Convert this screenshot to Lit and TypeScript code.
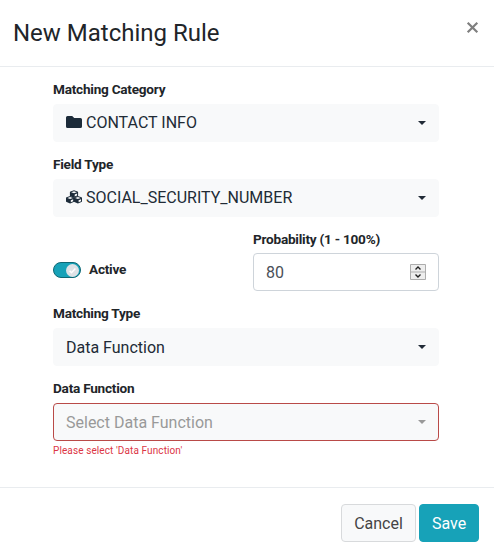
import { LitElement, html, css, svg, nothing } from "lit";
import { customElement, property } from "lit/decorators.js";

const folder = svg`<path fill="currentColor" d="M1.500 1h4.700l2 2h6.300A1.500 1.500 0 0 1 16 4.500v7a1.500 1.500 0 0 1-1.500 1.500h-13A1.500 1.500 0 0 1 0 11.500v-9A1.500 1.500 0 0 1 1.500 1z"/>`;
const cube = (x: number, y: number) => svg`<g transform="translate(${x} ${y})">
  <path fill="currentColor" d="M4.100 0 7.600 1.300Q8.200 1.500 8.200 2.100V5.200Q8.200 5.800 7.600 6.100L4.100 7.500.6 6.100Q0 5.800 0 5.200V2.100Q0 1.500.6 1.300z"/>
  <path fill="#f8f9fa" d="M4.100 1 6.900 2 4.100 3.100 1.300 2zM4.800 4.200 7.200 3.200V5.200L4.800 6.200z"/>
</g>`;
const cubes = svg`${cube(3.9, 0.2)}${cube(0, 6)}${cube(7.8, 6)}`;

@customElement("select-field")
export class SelectField extends LitElement {
  static styles = css`
    :host { display: block; }
    .label { font-size: 13.6px; font-weight: 700; line-height: 20px; height: 25px; letter-spacing: -0.24px; }
    .box {
      box-sizing: border-box; height: 38px; padding: 0 12px; border: 1px solid #f8f9fa;
      border-radius: 4px; background: #f8f9fa; display: flex; align-items: center; color: #212b36;
      font-size: 16px; line-height: 24px;
    }
    .invalid { border-color: #b94a48; color: #999; }
    svg { width: 16px; height: 16px; margin-right: 4px; flex: none; color: #1c2b39; }
    .text { flex: 1; }
    .plain { padding-top: 2px; }
    .caret { border: 4px solid transparent; border-top: 4px solid currentColor; border-bottom: 0; }
    .error { font-size: 10px; line-height: 15px; margin-top: 2px; color: #dc3545; letter-spacing: 0.1px; }
  `;
  @property() label = "";
  @property() value = "";
  @property() icon = "";
  @property() error = "";

  render() {
    return html`
      <div class="label">${this.label}</div>
      <div class="box ${this.error ? "invalid" : ""}">
        ${this.icon ? html`<svg viewBox="0 0 16 16">${this.icon === "folder" ? folder : cubes}</svg>` : nothing}
        <span class="text ${this.icon ? "" : "plain"}">${this.value}</span>
        <span class="caret"></span>
      </div>
      ${this.error ? html`<div class="error">${this.error}</div>` : nothing}
    `;
  }
}

@customElement("app-root")
export class AppRoot extends LitElement {
  static styles = css`
    :host { display: flex; flex-direction: column; box-sizing: border-box; height: 557px; width: 494px;
      background: #fff; color: #212529; font-family: Roboto, "Liberation Sans", sans-serif; }
    header { box-sizing: border-box; height: 67px; border-bottom: 1px solid #e9ecef; padding: 15px 15px 0 13px;
      display: flex; justify-content: space-between; }
    h1 { margin: 0; font-size: 24px; line-height: 36px; font-weight: 400; }
    .close { width: 13px; height: 13px; margin-top: 6px; color: #7f7f7f; }
    main { box-sizing: border-box; height: 421px; padding: 12px 55px 0 53px; border-bottom: 1px solid #e9ecef;
      display: flex; flex-direction: column; }
    select-field { margin-bottom: 12px; }
    .row { display: flex; justify-content: space-between; height: 62px; margin-bottom: 12px; }
    .label { font-size: 13.6px; font-weight: 700; line-height: 20px; letter-spacing: -0.24px; }
    .active { display: flex; align-items: center; gap: 8px; height: 20px; margin-top: 31px; }
    .active .label { padding-bottom: 2px; }
    .switch { box-sizing: border-box; width: 28px; height: 16px; border: 1px solid #0e6875; border-radius: 8px;
      background: #17a2b8; display: flex; justify-content: flex-end; align-items: center; padding-right: 1px; }
    .knob { width: 13px; height: 13px; }
    .prob { width: 186px; }
    .input { box-sizing: border-box; height: 38px; margin-top: 4px; border: 1px solid #ced4da; border-radius: 4px;
      display: flex; align-items: center; justify-content: space-between; padding: 0 12px; font-size: 16px; color: #495057; }
    .spin { width: 16px; height: 16px; }
    footer { display: flex; justify-content: flex-end; gap: 3px; padding: 16px 15px 0 0; }
    button { box-sizing: border-box; height: 38px; padding: 2px 0 0; border-radius: 4px; font: 400 16px/24px Roboto, sans-serif; }
    .cancel { width: 75px; border: 1px solid #d8dadc; background: #f8f9fa; color: #444; }
    .save { width: 60px; border: 1px solid #17a2b8; background: #17a2b8; color: #fff; }
  `;

  render() {
    return html`
      <header>
        <h1>New Matching Rule</h1>
        <svg class="close" viewBox="0 0 13 13"><path d="M1.700 1.700 11.300 11.300M11.300 1.700 1.700 11.300" stroke="currentColor" stroke-width="2.200" fill="none"/></svg>
      </header>
      <main>
        <select-field label="Matching Category" icon="folder" value="CONTACT INFO"></select-field>
        <select-field label="Field Type" icon="cubes" value="SOCIAL_SECURITY_NUMBER"></select-field>
        <div class="row">
          <div class="active">
            <span class="switch"><svg class="knob" viewBox="0 0 13 13"><circle cx="6.500" cy="6.500" r="6.500" fill="#dee2e6"/><path d="M3.600 6.800 5.500 8.700 9.400 4.600" stroke="#fff" stroke-width="1.500" fill="none"/></svg></span>
            <span class="label">Active</span>
          </div>
          <div class="prob">
            <div class="label">Probability (1 - 100%)</div>
            <div class="input">
              <span>80</span>
              <svg class="spin" viewBox="0 0 16 16"><path d="M.5.5h15v15H.5zM.5 8h15" fill="#eee" stroke="#adadad"/><path d="M5.500 5.500 8 3l2.500 2.500M5.500 10.500 8 13l2.500-2.500" fill="none" stroke="#222" stroke-width="1.400"/></svg>
            </div>
          </div>
        </div>
        <select-field label="Matching Type" value="Data Function"></select-field>
        <select-field label="Data Function" value="Select Data Function" error="Please select 'Data Function'"></select-field>
      </main>
      <footer>
        <button class="cancel">Cancel</button>
        <button class="save">Save</button>
      </footer>
    `;
  }
}
